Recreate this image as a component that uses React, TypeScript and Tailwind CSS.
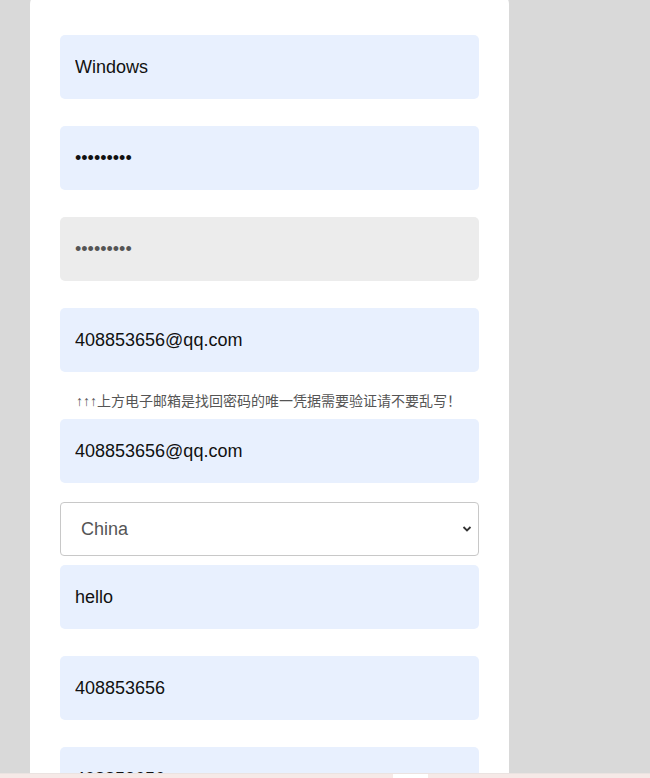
import { useState } from "react"

const fieldBase =
  "block w-full h-[64px] rounded-[5px] px-[15px] text-[18px] text-[#111] outline-none"

export default function App() {
  const [country, setCountry] = useState("China")

  return (
    <div className="min-h-screen bg-[#d9d9d9] overflow-hidden" style={{ fontFamily: '"Liberation Sans", "Noto Sans CJK SC", Arial, sans-serif' }}>
      <div className="ml-[30px] w-[479px] -mt-[6px] pt-[41px] px-[30px] pb-[40px] bg-white rounded-[10px]">
        {/* account */}
        <input className={`${fieldBase} bg-[#e8f0fe] mb-[27px]`} defaultValue="Windows" readOnly />

        {/* password */}
        <input type="password" className={`${fieldBase} bg-[#e8f0fe] mb-[27px]`} defaultValue="123456789" readOnly />

        {/* confirm password (locked) */}
        <input type="password" className={`${fieldBase} bg-[#ececec] text-[#555] mb-[27px]`} defaultValue="123456789" disabled />

        {/* email */}
        <input className={`${fieldBase} bg-[#e8f0fe]`} defaultValue="408853656@qq.com" readOnly />
        <p className="pl-[16px] pt-[20px] pb-[9px] text-[14px] leading-[18px] text-[#555]">
          ↑↑↑上方电子邮箱是找回密码的唯一凭据需要验证请不要乱写！
        </p>
        <input className={`${fieldBase} bg-[#e8f0fe] mb-[19px]`} defaultValue="408853656@qq.com" readOnly />

        {/* country */}
        <div className="relative mb-[9px]">
          <select
            value={country}
            onChange={(e) => setCountry(e.target.value)}
            className="block w-full h-[54px] appearance-none rounded-[4px] border border-[#c8c8c8] bg-white pl-[20px] text-[18px] text-[#555] outline-none"
          >
            <option>China</option>
            <option>Japan</option>
            <option>USA</option>
          </select>
          <svg className="absolute right-[7px] top-[23px] w-[10px] h-[8px] text-[#333]" viewBox="0 0 10 8" fill="none">
            <path d="M1.5 2 L5 5.5 L8.5 2" stroke="currentColor" strokeWidth="1.8" />
          </svg>
        </div>

        <input className={`${fieldBase} bg-[#e8f0fe] mb-[27px]`} defaultValue="hello" readOnly />
        <input className={`${fieldBase} bg-[#e8f0fe] mb-[27px]`} defaultValue="408853656" readOnly />
        <input className={`${fieldBase} bg-[#e8f0fe]`} defaultValue="408853656" readOnly />
      </div>

      {/* bottom bar peeking in */}
      <div className="fixed bottom-0 left-0 w-full h-[5px] bg-[#f6e9e7] border-t border-[#ebe3e1]">
        <div className="ml-[393px] w-[35px] h-full bg-white" />
      </div>
    </div>
  )
}
